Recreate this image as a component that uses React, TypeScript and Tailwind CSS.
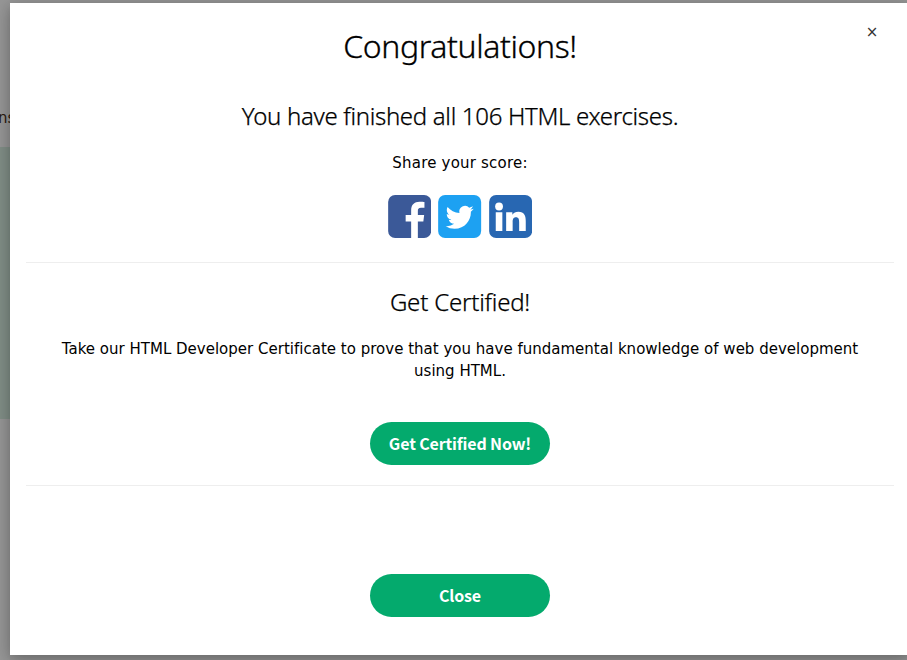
import type { ReactNode } from 'react';

function PillButton({ children }: { children: ReactNode }) {
  return (
    <button className="mx-auto flex h-[43px] w-[180px] items-center justify-center rounded-full bg-[#04aa6d] font-['Noto_Sans_CJK_SC',sans-serif] text-[16px] font-bold leading-[43px] tracking-[-0.15px] text-white">
      {children}
    </button>
  );
}

function FacebookIcon() {
  return (
    <svg width="43.300" height="43" viewBox="0 0 43 43" aria-label="Facebook">
      <rect width="43" height="43" rx="7" fill="#3b5998" />
      <path fill="#fff" d="M23 43V26.500h-5.500V20H23v-4.800C23 9.600 26.300 6.700 31.300 6.700c2.400 0 4.400.2 5 .3v5.800h-3.400c-2.700 0-3.200 1.300-3.200 3.100V20h6.300l-.8 6.500h-5.500V43z" />
    </svg>
  );
}

function TwitterIcon() {
  return (
    <svg width="43.300" height="43" viewBox="0 0 43 43" aria-label="Twitter">
      <rect width="43" height="43" rx="7" fill="#1da1f2" />
      <g transform="translate(7.500 8.300) scale(1.170)">
        <path fill="#fff" d="M23.953 4.570a10 10 0 01-2.825.775 4.958 4.958 0 002.163-2.723c-.951.555-2.005.959-3.127 1.184a4.920 4.920 0 00-8.384 4.482C7.690 8.095 4.067 6.130 1.640 3.162a4.822 4.822 0 00-.666 2.475c0 1.710.870 3.213 2.188 4.096a4.904 4.904 0 01-2.228-.616v.060a4.923 4.923 0 003.946 4.827 4.996 4.996 0 01-2.212.085 4.936 4.936 0 004.604 3.417 9.867 9.867 0 01-6.102 2.105c-.390 0-.779-.023-1.170-.067a13.995 13.995 0 007.557 2.209c9.053 0 13.998-7.496 13.998-13.985 0-.210 0-.420-.015-.630A9.935 9.935 0 0024 4.590z" />
      </g>
    </svg>
  );
}

function LinkedinIcon() {
  return (
    <svg width="43.300" height="43" viewBox="0 0 43 43" aria-label="LinkedIn">
      <rect width="43" height="43" rx="7" fill="#2867b2" />
      <g fill="#fff">
        <circle cx="9.900" cy="11.500" r="3.900" />
        <path d="M6.600 17.300h6.600V36H6.600zM17 17.300h6.200v2.500c1.200-2 3.300-3 6-3 6 0 7.400 4 7.400 9.200v10H30v-9c0-2.500-.4-4.800-3.200-4.800s-3.300 2.300-3.300 4.700V36H17z" />
      </g>
    </svg>
  );
}

export default function App() {
  return (
    <div className="relative h-[660px] w-full overflow-hidden bg-[#969696] font-['DejaVu_Sans',sans-serif] text-black">
      <div className="flex h-full w-10 flex-col">
        <div className="h-[147px] pt-[109px]">
          <p className="-ml-[2px] text-[15px] leading-[18px] text-[#2b1a10]">ns</p>
        </div>
        <div className="h-[272px] bg-[#808e86]" />
      </div>

      <div className="absolute left-[10px] top-[3px] flex h-[652px] w-[900px] flex-col bg-white px-4 text-center shadow-[0_4px_10px_rgba(0,0,0,0.16),0_4px_20px_rgba(0,0,0,0.19)]">
        <button className="absolute left-[852px] top-[19px] h-5 w-5 text-[15px] leading-5 text-[#333]">×</button>

        <section className="flex h-[259px] flex-col items-center">
          <h1 className="mt-[21px] font-['Noto_Sans',sans-serif] text-[32px] font-light leading-[44px] tracking-[-0.4px] [-webkit-text-stroke:0.3px_black]">Congratulations!</h1>
          <h2 className="mt-[31px] font-['Noto_Sans',sans-serif] text-[24px] font-light leading-[34px] tracking-[-0.31px] [-webkit-text-stroke:0.25px_black]">You have finished all 106 HTML exercises.</h2>
          <p className="mt-[19px] text-[15px] leading-[22px] tracking-[0.2px]">Share your score:</p>
          <div className="mt-[21px] flex gap-[7px]">
            <FacebookIcon />
            <TwitterIcon />
            <LinkedinIcon />
          </div>
        </section>

        <section className="h-[223px] w-[868px] border-t border-[#eee]">
          <h2 className="mt-[22px] font-['Noto_Sans',sans-serif] text-[24px] font-light leading-[34px] tracking-[-0.2px] [-webkit-text-stroke:0.25px_black]">Get Certified!</h2>
          <p className="mt-[19px] text-[15px] leading-[22px] tracking-[0.01px]">
            Take our HTML Developer Certificate to prove that you have fundamental knowledge of web development
            <br />
            using HTML.
          </p>
          <div className="mt-[40px]">
            <PillButton>Get Certified Now!</PillButton>
          </div>
        </section>

        <section className="w-[868px] border-t border-[#eee] pt-[88px]">
          <PillButton>Close</PillButton>
        </section>
      </div>
    </div>
  );
}
